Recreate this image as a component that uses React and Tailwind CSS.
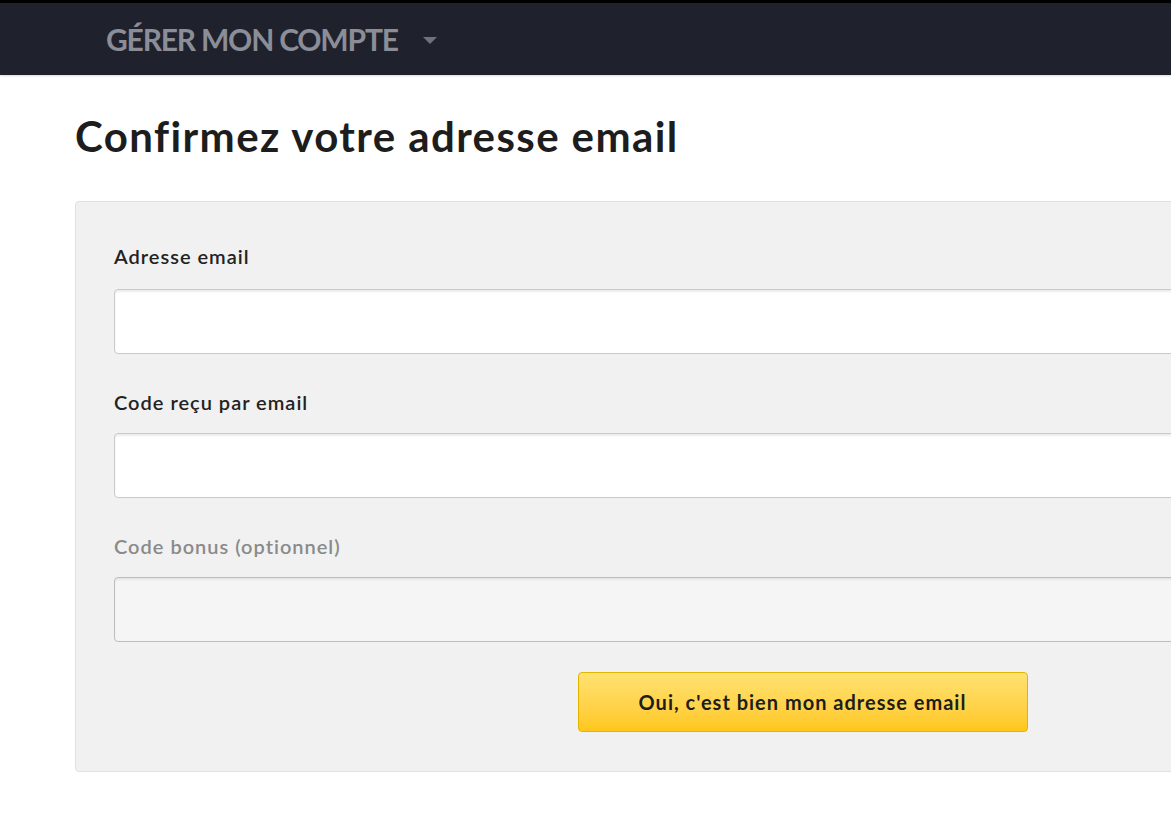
export default function App() {
  return (
    <div className="w-[1171px] h-[822px] overflow-hidden bg-white font-['Lato',sans-serif]">
      <header className="h-[75px] bg-[#1f212d] border-t-[3px] border-black flex items-center pl-[106px] shadow-[0_1px_2px_rgba(0,0,0,0.15)]">
        <span className="text-[30px] font-bold text-[#8b8d97] tracking-[-1.2px] leading-none">GÉRER MON COMPTE</span>
        <span className="ml-[25px] mt-[2px] w-0 h-0 border-l-[7px] border-r-[7px] border-t-[7px] border-l-transparent border-r-transparent border-t-[#6f717b]" />
      </header>

      <main className="pl-[75px] pt-[36px]">
        <h1 className="text-[42px] font-bold text-[#1d1d1d] leading-[50px] tracking-[1.4px]">Confirmez votre adresse email</h1>

        <form className="mt-[40px] w-[1455px] bg-[#f1f1f1] border border-[#e1e1e1] rounded-[4px] px-[38px] pt-[42px] pb-[39px]">
          <label className="block text-[20px] font-semibold text-[#222] leading-[24px] tracking-[1px]">Adresse email</label>
          <input className="mt-[21px] block w-full h-[65px] bg-white border border-[#c9c9c9] rounded-[4px] shadow-[inset_0_2px_2px_rgba(0,0,0,0.08)]" />

          <label className="mt-[36px] block text-[20px] font-semibold text-[#222] leading-[24px] tracking-[1px]">Code reçu par email</label>
          <input className="mt-[19px] block w-full h-[65px] bg-white border border-[#c9c9c9] rounded-[4px] shadow-[inset_0_2px_2px_rgba(0,0,0,0.08)]" />

          <label className="mt-[36px] block text-[20px] font-semibold text-[#8a8a8a] leading-[24px] tracking-[1px]">Code bonus (optionnel)</label>
          <input disabled className="mt-[19px] block w-full h-[65px] bg-[#f5f5f5] border border-[#bdbdbd] rounded-[4px] shadow-[inset_0_2px_2px_rgba(0,0,0,0.06)]" />

          <div className="mt-[30px] flex justify-center">
            <button type="button" className="w-[450px] h-[60px] rounded-[4px] border border-[#e2b400] bg-gradient-to-b from-[#ffe270] to-[#ffc716] text-[20px] font-bold text-[#1d1d1d] tracking-[1px]">
              Oui, c'est bien mon adresse email
            </button>
          </div>
        </form>
      </main>
    </div>
  );
}
